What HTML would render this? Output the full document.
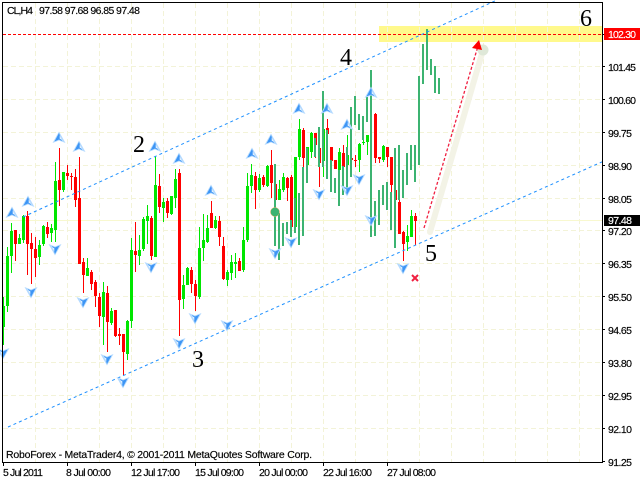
<!DOCTYPE html>
<html><head><meta charset="utf-8"><style>
html,body{margin:0;padding:0;background:#fff;width:640px;height:480px;overflow:hidden}
svg{display:block}
text{font-family:"Liberation Sans",sans-serif;font-size:10.5px;fill:#000;stroke:#000;stroke-width:.15px}
.w{fill:#fff;stroke:#fff}
.n{font-family:"Liberation Serif",serif;font-size:24px;stroke-width:0}
</style></head><body>
<svg width="640" height="480" viewBox="0 0 640 480" xmlns="http://www.w3.org/2000/svg">
<defs>
<g id="u"><path d="M0-6.500 6.500 5 0 2.500-6.500 5Z" fill="#b4daff"/><path d="M0-5-4.500 3.500 0 1.500 3 3Z" fill="#3d95f5"/><path d="M.7-2.800 .7 .8 3 2Z" fill="#e4f2ff"/></g>
<g id="d"><path d="M0 6.500 6.500-5 0-2.500-6.500-5Z" fill="#b4daff"/><path d="M0 5 4.500-3.500 0-1.500-3-3Z" fill="#3d95f5"/><path d="M-.7 2.800-.7-.8-3-2Z" fill="#e4f2ff"/></g>
</defs>
<rect width="640" height="480" fill="#fff"/>
<rect x="379" y="26" width="223" height="16" fill="#fff98c"/>
<g shape-rendering="crispEdges">
<path fill="none" stroke="#f3f3d8" stroke-width="1" stroke-dasharray="5 3" d="M3 66.500H602M3 99.500H602M3 132.500H602M3 165.500H602M3 198.500H602M3 230.500H602M3 263.500H602M3 296.500H602M3 329.500H602M3 362.500H602M3 395.500H602M3 428.500H602M35.500 3V462M67.500 3V462M99.500 3V462M131.500 3V462M163.500 3V462M195.500 3V462M227.500 3V462M259.500 3V462M291.500 3V462M323.500 3V462M355.500 3V462M387.500 3V462M419.500 3V462M451.500 3V462M483.500 3V462M515.500 3V462M547.500 3V462M579.500 3V462"/>
<path stroke="#f8f8cf" d="M3 220.500H602"/>
<path stroke="#f00" stroke-dasharray="3 2" d="M3 34.500H602"/>
<!-- green wicks -->
<path fill="none" stroke="#00e600" d="M3.500 297V345M7.500 247V312M11.500 223V273M19.500 234V244M23.500 215V243M39.500 240V265M43.500 225V246M51.500 224V242M55.500 162V242M63.500 172V192M87.500 258V276M103.500 282V345M111.500 308V325M127.500 320V360M131.500 238V328M139.500 235V265M143.500 217V251M147.500 205V244M155.500 156V257M163.500 198V222M171.500 196V215M175.500 169V208M183.500 275V309M187.500 267V285M199.500 227V299M203.500 214V261M207.500 215V243M215.500 216V229M227.500 270V286M231.500 255V280M235.500 253V278M243.500 227V272M247.500 173V242M251.500 164V193M259.500 174V192M267.500 165V187M279.500 180V200M283.500 173V192M295.500 157V233M299.500 119V160M307.500 147V170M311.500 132V158M323.500 122V177M339.500 148V173M347.500 135V175M359.500 143V172M363.500 140V145M367.500 135V155M383.500 145V162M407.500 225V251M411.500 210V237"/>
<!-- green bodies -->
<path fill="none" stroke="#00e600" stroke-width="3" d="M3.500 306V327M7.500 256V306M11.500 231V256M19.500 238V244M23.500 216V240M39.500 245V257M43.500 226V244M51.500 228V233M55.500 181V230M63.500 172V190M87.500 268V276M103.500 292V317M111.500 311V323M127.500 321V354M131.500 250V321M139.500 250V256M143.500 219V249M147.500 216V221M155.500 185V257M163.500 202V208M171.500 196V214M175.500 179V198M183.500 285V299M187.500 268V285M199.500 248V297M203.500 240V248M207.500 228V242M215.500 220V228M227.500 272V280M231.500 262V273M235.500 262V264M243.500 240V270M247.500 186V240M251.500 175V186M259.500 178V190M267.500 166V186M279.500 189V200M283.500 177V190M295.500 157V227M299.500 129V157M307.500 147V165M311.500 133V152M323.500 129V161M339.500 152V170M347.500 155V165M359.500 144V160M363.500 142V143M367.500 135V142M383.500 146V160M407.500 236V242M411.500 216V237"/>
<!-- red wicks -->
<path fill="none" stroke="#f00" d="M15.500 230V261M27.500 211V275M31.500 233V284M35.500 237V277M47.500 222V238M59.500 148V206M67.500 165V180M71.500 173V190M75.500 169V207M79.500 157V264M83.500 258V293M91.500 270V290M95.500 280V307M99.500 293V327M107.500 286V352M115.500 310V337M119.500 328V345M123.500 334V375M135.500 222V272M151.500 216V260M159.500 174V213M167.500 198V218M179.500 169V336M191.500 267V293M195.500 280V311M211.500 201V228M219.500 216V246M223.500 237V280M239.500 258V271M255.500 172V209M263.500 175V187M271.500 150V198M275.500 184V200M287.500 177V201M291.500 175V227M303.500 128V167M315.500 133V158M319.500 145V187M327.500 119V134M331.500 147V161M335.500 160V169M343.500 145V170M351.500 155V162M355.500 155V167M375.500 113V163M379.500 157V163M387.500 147V167M391.500 157V192M395.500 185V203M399.500 190V234M403.500 231V261M415.500 213V245"/>
<!-- red bodies -->
<path fill="none" stroke="#f00" stroke-width="3" d="M15.500 230V244M27.500 216V244M31.500 243V249M35.500 249V258M47.500 227V234M59.500 180V190M67.500 173V176M71.500 176V177M75.500 177V200M79.500 198V264M83.500 262V275M91.500 272V284M95.500 282V296M99.500 297V316M107.500 293V322M115.500 310V336M119.500 334V336M123.500 334V352M135.500 251V255M151.500 218V256M159.500 186V207M167.500 201V213M179.500 173V300M191.500 270V284M195.500 284V296M211.500 213V228M219.500 221V237M223.500 246V279M239.500 261V271M255.500 176V190M263.500 177V185M271.500 165V183M275.500 184V200M287.500 178V188M291.500 177V227M303.500 130V158M315.500 133V145M319.500 148V163M327.500 128V134M331.500 147V161M335.500 160V169M343.500 153V167M351.500 158V160M355.500 160V161M375.500 114V158M379.500 157V159M387.500 147V157M391.500 157V185M395.500 190V200M399.500 202V234M403.500 232V244M415.500 216V221"/>
<!-- overlay bars -->
<path fill="none" stroke="#3cb371" stroke-width="2" d="M275 164V246M279 213V260M283 223V246M287 222V234M291 220V237M295 198V233M299 193V245M303 167V236M307 148V183M315 138V157M319 127V167M323 91V167M327 130V179M331 160V192M335 178V193M339 170V206M343 166V195M347 147V195M351 107V177M355 96V125M359 114V130M363 116V140M367 97V122M371 70V237M375 201V236M379 190V225M383 185V205M387 182V210M391 192V230M395 148V248M399 145V200M403 170V198M407 153V185M411 145V170M415 145V182M419 76V165M423 44V84M427 29V70M431 59V75M435 66V93M439 78V94"/>
</g>
<circle cx="275" cy="212" r="4.500" fill="#3cb371" stroke="#e8a860" stroke-width=".5"/>
<!-- channel lines -->
<g fill="none" stroke="#1e90ff" stroke-width="1" stroke-dasharray="3 3">
<path d="M23 217 497 0"/>
<path d="M8 427 604 161"/>
</g>
<!-- target arrows -->
<path d="M430 232 483 50" fill="none" stroke="#f3f3e6" stroke-width="6" stroke-linecap="round"/>
<circle cx="483" cy="50" r="5.500" fill="#dfe8d8"/>
<path d="M424 228 478 46" fill="none" stroke="#f02040" stroke-width="1.300" stroke-dasharray="3 2"/>
<path d="M479 40 472 48 482 50Z" fill="#f00"/>
<path d="M412 275 418 281M418 275 412 281" stroke="#f02040" stroke-width="2"/>
<!-- fractal arrows -->
<use href="#u" x="12" y="213"/><use href="#u" x="28" y="202"/><use href="#u" x="59" y="138"/><use href="#u" x="79" y="147"/><use href="#u" x="155" y="147"/><use href="#u" x="179" y="159"/><use href="#u" x="211" y="191"/><use href="#u" x="252" y="154"/><use href="#u" x="271" y="140"/><use href="#u" x="299" y="109"/><use href="#u" x="327" y="109"/><use href="#u" x="347" y="125"/><use href="#u" x="371" y="93"/>
<use href="#d" x="55" y="249"/><use href="#d" x="151" y="267"/><use href="#d" x="31" y="292"/><use href="#d" x="83" y="302"/><use href="#d" x="107" y="359"/><use href="#d" x="123" y="382"/><use href="#d" x="179" y="343"/><use href="#d" x="195" y="318"/><use href="#d" x="3" y="353"/><use href="#d" x="227" y="325"/><use href="#d" x="275" y="253"/><use href="#d" x="291" y="242"/><use href="#d" x="319" y="194"/><use href="#d" x="347" y="190"/><use href="#d" x="359" y="179"/><use href="#d" x="371" y="220"/><use href="#d" x="403" y="268"/>
<!-- frame -->
<g shape-rendering="crispEdges" fill="none" stroke="#000">
<path d="M2.500 2.500H602.500V462.500H2.500Z"/>
<path d="M602 34.500h3M602 66.500h3M602 99.500h3M602 132.500h3M602 165.500h3M602 198.500h3M602 230.500h3M602 263.500h3M602 296.500h3M602 329.500h3M602 362.500h3M602 395.500h3M602 428.500h3M602 461.500h3M3.500 462v4M67.500 462v4M131.500 462v4M195.500 462v4M259.500 462v4M323.500 462v4M387.500 462v4"/>
</g>
<rect x="604" y="28" width="36" height="12" fill="#f00" shape-rendering="crispEdges"/>
<rect x="604" y="215" width="36" height="11" fill="#000" shape-rendering="crispEdges"/>
<!-- numerals -->
<text class="n" x="133" y="152">2</text>
<text class="n" x="192" y="367">3</text>
<text class="n" x="340" y="65">4</text>
<text class="n" x="425" y="261">5</text>
<text class="n" x="580" y="26">6</text>
<!-- text -->
<text x="7" y="14" textLength="26" lengthAdjust="spacing">CL,H4</text>
<text x="39" y="14" textLength="101" lengthAdjust="spacing">97.58 97.68 96.85 97.48</text>
<text x="6" y="458" textLength="306" lengthAdjust="spacing">RoboForex - MetaTrader4, © 2001-2011 MetaQuotes Software Corp.</text>
<text x="3" y="476" textLength="40" lengthAdjust="spacing">5 Jul 2011</text>
<text x="66" y="476" textLength="45" lengthAdjust="spacing">8 Jul 00:00</text>
<text x="131" y="476" textLength="49" lengthAdjust="spacing">12 Jul 17:00</text>
<text x="195" y="476" textLength="49" lengthAdjust="spacing">15 Jul 09:00</text>
<text x="259" y="476" textLength="49" lengthAdjust="spacing">20 Jul 00:00</text>
<text x="323" y="476" textLength="49" lengthAdjust="spacing">22 Jul 16:00</text>
<text x="387" y="476" textLength="49" lengthAdjust="spacing">27 Jul 08:00</text>
<g>
<text class="w" x="608" y="38" textLength="28">102.30</text>
<text x="608" y="71" textLength="28">101.45</text>
<text x="608" y="104" textLength="28">100.60</text>
<text x="608" y="137" textLength="24">99.75</text>
<text x="608" y="170" textLength="24">98.90</text>
<text x="608" y="203" textLength="24">98.05</text>
<text class="w" x="608" y="224" textLength="24">97.48</text>
<text x="608" y="235" textLength="24">97.20</text>
<text x="608" y="268" textLength="24">96.35</text>
<text x="608" y="301" textLength="24">95.50</text>
<text x="608" y="334" textLength="24">94.65</text>
<text x="608" y="367" textLength="24">93.80</text>
<text x="608" y="400" textLength="24">92.95</text>
<text x="608" y="433" textLength="24">92.10</text>
<text x="608" y="466" textLength="24">91.25</text>
</g>
</svg>
</body></html>
